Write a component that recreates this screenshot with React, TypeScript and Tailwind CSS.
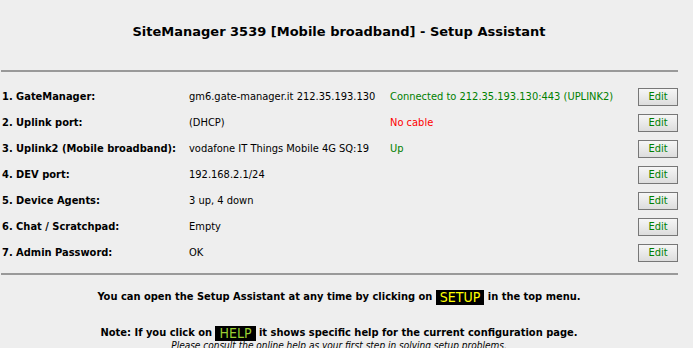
const rows = [
  {
    label: '1. GateManager:',
    value: 'gm6.gate-manager.it 212.35.193.130',
    status: 'Connected to 212.35.193.130:443 (UPLINK2)',
    tone: 'ok',
  },
  { label: '2. Uplink port:', value: '(DHCP)', status: 'No cable', tone: 'bad' },
  {
    label: '3. Uplink2 (Mobile broadband):',
    value: 'vodafone IT Things Mobile 4G SQ:19',
    status: 'Up',
    tone: 'ok',
  },
  { label: '4. DEV port:', value: '192.168.2.1/24', status: '', tone: 'ok' },
  { label: '5. Device Agents:', value: '3 up, 4 down', status: '', tone: 'ok' },
  { label: '6. Chat / Scratchpad:', value: 'Empty', status: '', tone: 'ok' },
  { label: '7. Admin Password:', value: 'OK', status: '', tone: 'ok' },
];

function EditButton() {
  return (
    <button className="flex h-[18px] w-[40px] items-center justify-center border border-[#777] bg-gradient-to-b from-[#f6f6f6] to-[#dddddd] text-[11px] text-[#008000]">
      Edit
    </button>
  );
}

export default function App() {
  return (
    <div className="h-[348px] w-[693px] overflow-hidden bg-[#eeeeee] font-['DejaVu_Sans_Condensed','DejaVu_Sans',sans-serif] text-[11px] text-black">
      <div className="w-[678px]">
        <h1 className="pt-[24px] pb-[30px] text-center font-['DejaVu_Sans',sans-serif] text-[13px] font-bold leading-[16px]">
          SiteManager 3539 [Mobile broadband] - Setup Assistant
        </h1>
        <hr className="ml-[1px] border-t-2 border-[#999]" />
        <div className="flex flex-col pt-[12px]">
          {rows.map((row) => (
            <div
              key={row.label}
              className="grid h-[26px] grid-cols-[189px_201px_1fr_auto] items-center"
            >
              <span className="pl-[2px] font-bold">{row.label}</span>
              <span>{row.value}</span>
              <span className={row.tone === 'bad' ? 'text-[#ff0000]' : 'text-[#008000]'}>
                {row.status}
              </span>
              <EditButton />
            </div>
          ))}
        </div>
        <hr className="mt-[7px] ml-[1px] border-t-2 border-[#999]" />
        <p className="mt-[14px] text-center font-bold leading-[16px]">
          You can open the Setup Assistant at any time by clicking on{' '}
          <span className="inline-block bg-black px-[4px] align-middle text-[14px] font-normal leading-[15px] text-[#ffff00]">
            SETUP
          </span>{' '}
          in the top menu.
        </p>
        <p className="mt-[20px] text-center font-bold leading-[16px]">
          Note: If you click on{' '}
          <span className="inline-block bg-black px-[4px] align-middle text-[14px] font-normal leading-[15px] text-[#9acd32]">
            HELP
          </span>{' '}
          it shows specific help for the current configuration page.
        </p>
        <p className="-mt-[1px] text-center text-[10px] italic leading-[12px]">
          Please consult the online help as your first step in solving setup problems.
        </p>
      </div>
    </div>
  );
}
